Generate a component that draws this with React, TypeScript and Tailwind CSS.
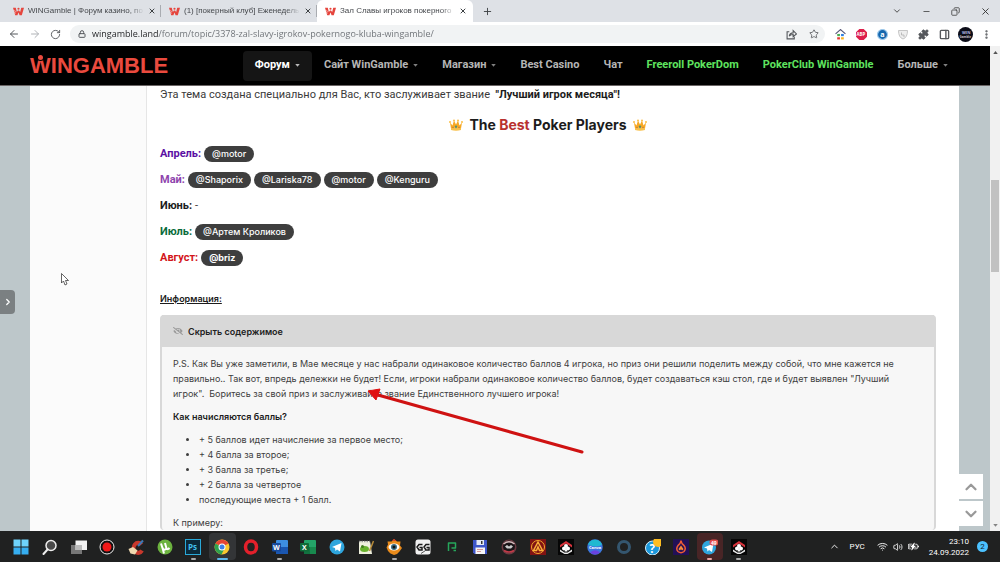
import type { ReactNode } from "react";
import {
  ArrowLeft, ArrowRight, ChevronDown, ChevronRight, ChevronUp, Copy, Lock, Minus, MoreVertical,
  PanelRight, Plus, Puzzle, RotateCw, Star, Volume2, Wifi, X,
} from "lucide-react";
import { BsBatteryCharging } from "react-icons/bs";
import { FaEyeSlash } from "react-icons/fa";

const tabs = [
  { title: "WINGamble | Форум казино, по", active: false },
  { title: "(1) [покерный клуб] Еженедель", active: false },
  { title: "Зал Славы игроков покерного", active: true },
];

const navItems = [
  { label: "Форум", caret: true, tone: "bg-[#151515] text-white" },
  { label: "Сайт WinGamble", caret: true, tone: "text-[#b5b5b5]" },
  { label: "Магазин", caret: true, tone: "text-[#b5b5b5]" },
  { label: "Best Casino", caret: false, tone: "text-[#b5b5b5]" },
  { label: "Чат", caret: false, tone: "text-[#b5b5b5]" },
  { label: "Freeroll PokerDom", caret: false, tone: "text-[#5fe35f]" },
  { label: "PokerClub WinGamble", caret: false, tone: "text-[#5fe35f]" },
  { label: "Больше", caret: true, tone: "text-[#b5b5b5]" },
];

const months = [
  { name: "Апрель:", color: "text-[#5b0fa3]", players: ["@motor"], bold: false },
  { name: "Май:", color: "text-[#8e44ad]", players: ["@Shaporix", "@Lariska78", "@motor", "@Kenguru"], bold: false },
  { name: "Июнь:", color: "text-[#1c1c1c]", players: [], bold: false },
  { name: "Июль:", color: "text-[#0a6b3b]", players: ["@Артем Кроликов"], bold: false },
  { name: "Август:", color: "text-[#d3161b]", players: ["@briz"], bold: true },
];

const points = [
  "+ 5 баллов идет начисление за первое место;",
  "+ 4 балла за второе;",
  "+ 3 балла за третье;",
  "+ 2 балла за четвертое",
  "последующие места + 1 балл.",
];

function Favicon() {
  return (
    <svg viewBox="0 0 20 16" className="w-[11px] h-[9px] shrink-0" aria-hidden="true">
      <path d="M0 1h5l2 8 2-3h2l2 3 2-8h5l-4 14h-4l-2-5-2 5H4z" fill="#e5453d" />
      <circle cx="10" cy="3" r="2" fill="#e5453d" />
      <path d="M1 6l4 2M2 10l3 1" stroke="#fff" strokeWidth="1" />
    </svg>
  );
}

function Crown() {
  return (
    <svg viewBox="0 0 28 24" className="w-[14px] h-3" aria-hidden="true">
      <path d="M2 7l5 6 3-10 4 8 4-8 3 10 5-6-2 12H4z" fill="#f7a823" />
      <path d="M4 18q10-3 20 0v4q-10 3-20 0z" fill="#f8c04a" />
      <circle cx="2" cy="6" r="2" fill="#fbbf45" />
      <circle cx="10" cy="3" r="2" fill="#fbbf45" />
      <circle cx="18" cy="3" r="2" fill="#fbbf45" />
      <circle cx="26" cy="6" r="2" fill="#fbbf45" />
      <path d="M14 12l2.500 3.500-2.500 3.500-2.500-3.500z" fill="#4b8f74" />
      <circle cx="8" cy="17" r="1.300" fill="#b96a3c" />
      <circle cx="20" cy="17" r="1.300" fill="#b96a3c" />
    </svg>
  );
}

function Caret() {
  return (
    <svg viewBox="0 0 6 4" className="w-[5px] h-[3px]" aria-hidden="true">
      <path d="M0 0h6L3 3.500z" fill="currentColor" opacity="0.7" />
    </svg>
  );
}

function ClubIcon() {
  return (
    <>
      <rect width="32" height="32" fill="#060606" />
      <path d="M4 12L16 4l12 8v5L16 9 4 17z" fill="#d8323b" />
      <path d="M4 21l9 6h6l9-6v4l-9 5h-6l-9-5z" fill="#e8e8e8" />
      <circle cx="16" cy="14" r="4" fill="#fff" />
      <circle cx="12" cy="19" r="4" fill="#fff" />
      <circle cx="20" cy="19" r="4" fill="#fff" />
      <path d="M16 16l3 9h-6z" fill="#fff" />
    </>
  );
}

interface TaskIcon {
  name: string;
  art: ReactNode;
  cell?: string;
  mark?: string;
}

const plane = <path d="M6 16l19-8-3 17-6-4-3 3-1-6z" fill="#fff" />;
const iconText = "font-['Open_Sans',sans-serif] font-bold";

// Every drawing shares a 32 x 32 view box
const taskIcons: TaskIcon[] = [
  { name: "Пуск", art: <><path d="M1 1h14v14H1zM17 1h14v14H17z" fill="#6fd3fb" /><path d="M1 17h14v14H1zM17 17h14v14H17z" fill="#36aef0" /></> },
  { name: "Поиск", art: <><circle cx="18" cy="13" r="10" fill="#4a4a4a" stroke="#eee" strokeWidth="3" /><path d="M11 21L3 30" stroke="#eee" strokeWidth="4" strokeLinecap="round" /></> },
  { name: "Представление задач", art: <><path d="M0 12h22v18H0z" fill="#777" /><path d="M9 3h23v19H9z" fill="#f2f2f2" /><path d="M9 12h13v10H9z" fill="#bbb" /></> },
  { name: "Запись", art: <><circle cx="16" cy="16" r="14" fill="#111" stroke="#eee" strokeWidth="2" /><circle cx="16" cy="16" r="9" fill="#f01818" /></> },
  { name: "CCleaner", art: <><path d="M27 11A9 10 0 1 0 28 23" fill="none" stroke="#c8382c" strokeWidth="8" /><path d="M30 3L20 14" stroke="#3d78b5" strokeWidth="4" /><path d="M1 20l9-4 9 7-5 8-9-2z" fill="#efd9b0" /></> },
  { name: "uTorrent", art: <><circle cx="16" cy="16" r="15" fill="#6cb33f" /><path d="M8 9l3 9q3 6 8 1l-3-11M19 19q2 3 6-1M11 18l3 11" fill="none" stroke="#fff" strokeWidth="4" /></> },
  { name: "Photoshop", mark: "w-[5px] bg-[#aaa]", art: <><rect x="1" y="1" width="30" height="30" fill="#0b2a3a" stroke="#2aa9d8" strokeWidth="2" /><text x="6" y="22" fontSize="16" fill="#41c0ee" className={iconText}>Ps</text></> },
  { name: "Chrome", cell: "bg-[#333537]", mark: "w-[11px] bg-[#5cb8ea]", art: <><circle cx="16" cy="16" r="15" fill="#f9c72f" /><path d="M16 16L3 9a15 15 0 0 1 26 0z" fill="#e64335" /><path d="M3 9a15 15 0 0 0 12 22l6-12z" fill="#2fa24f" /><circle cx="16" cy="16" r="7" fill="#fff" /><circle cx="16" cy="16" r="5" fill="#3f7fe8" /></> },
  { name: "Opera", art: <ellipse cx="16" cy="16" rx="11" ry="12" fill="none" stroke="#e3202b" strokeWidth="7" /> },
  { name: "Word", mark: "w-[5px] bg-[#aaa]", art: <><rect x="8" y="2" width="24" height="28" rx="2" fill="#3d8ee0" /><path d="M8 16h24v14H8z" fill="#1a56b0" /><rect y="8" width="18" height="17" rx="2" fill="#164a9c" /><text x="2" y="22" fontSize="14" fill="#fff" className={iconText}>W</text></> },
  { name: "Excel", art: <><rect x="8" y="2" width="24" height="28" rx="2" fill="#24a568" /><path d="M8 16h12v14H8z" fill="#127240" /><path d="M20 16h12v14H20z" fill="#188a4e" /><rect y="8" width="18" height="17" rx="2" fill="#0f6b38" /><text x="4" y="22" fontSize="14" fill="#fff" className={iconText}>X</text></> },
  { name: "Telegram", art: <><circle cx="16" cy="16" r="15" fill="#2ea5dd" />{plane}</> },
  { name: "Notepad++", art: <><path d="M2 4h22l4 26H2z" fill="#eef0dc" /><path d="M2 5h22" stroke="#999" strokeWidth="3" strokeDasharray="3 2" /><ellipse cx="13" cy="20" rx="9" ry="6" fill="#68b22d" /><circle cx="9" cy="15" r="3" fill="#417d1e" /><path d="M31 4l-8 20" stroke="#b98d3a" strokeWidth="3" /></> },
  { name: "Просмотр", mark: "w-[5px] bg-[#aaa]", art: <><path d="M16 0l6 5h7l-1 8 4 5-5 7-5 5-6 2-7-3-5-5-3-7 3-6-1-6 8 0z" fill="#e98b1b" /><path d="M12 3l4-3 5 4z" fill="#d3342e" /><ellipse cx="16" cy="16" rx="11" ry="7" fill="#fff" /><circle cx="16" cy="16" r="6" fill="#3a6d83" /><circle cx="16" cy="16" r="3" fill="#111" /></> },
  { name: "GG", art: <><rect x="1" y="1" width="30" height="30" rx="5" fill="#f1f1f1" /><path d="M15 11H8l-4 5 4 6h6v-5h-5M29 11h-7l-4 5 4 6h6v-5h-5" fill="none" stroke="#1b1b1b" strokeWidth="3" /><path d="M12 29l18-12" stroke="#555" strokeWidth="2" /></> },
  { name: "Poker", art: <path d="M9 24V8h14v10H15M19 23h5" fill="none" stroke="#26a65b" strokeWidth="3" strokeLinejoin="round" /> },
  { name: "Сохранение", art: <><path d="M2 2h28v28H5l-3-3z" fill="#3d55c9" /><path d="M9 2h15v10H9z" fill="#e4e9f5" /><path d="M18 4h3v6h-3z" fill="#333" /><path d="M7 17h19v13H7z" fill="#f6f6f6" /><path d="M10 21h12M10 25h8" stroke="#c77" strokeWidth="1.500" /></> },
  { name: "Покер", art: <><circle cx="16" cy="16" r="15" fill="#6d3b42" /><circle cx="16" cy="15" r="12" fill="#1b1518" /><path d="M5 10q11-9 22 0" fill="none" stroke="#d5b9bb" strokeWidth="3" /><path d="M8 15l4-3 4 3 4-3 4 3-4 4h-8z" fill="#ccc" /><path d="M6 23q10 6 20 0" fill="none" stroke="#c23b48" strokeWidth="3" /></> },
  { name: "Автоматы", art: <><rect width="32" height="32" fill="#801313" /><circle cx="16" cy="16" r="13" fill="none" stroke="#f6a92c" strokeWidth="2" /><path d="M16 6l9 17h-6l-3-7-3 7H7z" fill="none" stroke="#f9b03a" strokeWidth="3" /></> },
  { name: "Клуб", art: <ClubIcon /> },
  { name: "Canva", art: <><circle cx="16" cy="16" r="15.500" fill="#3c78e0" /><path d="M2 11A15 15 0 0 1 30 11Q20 19 2 11z" fill="#20b9d0" /><path d="M6 27a15 15 0 0 0 20 0q-9-9-20 0z" fill="#6a42de" /><text x="4" y="19" fontSize="8" fill="#fff" className={iconText}>Canva</text></> },
  { name: "Cortana", art: <circle cx="16" cy="16" r="11" fill="none" stroke="#34566f" strokeWidth="6" /> },
  { name: "Справка", art: <><circle cx="15" cy="18" r="14" fill="#1b98dc" stroke="#d9effa" strokeWidth="2" /><text x="9" y="27" fontSize="23" fill="#fff" className={iconText}>?</text><circle cx="26" cy="6" r="10" fill="#fdbd22" /></> },
  { name: "Огонь", art: <><rect width="32" height="32" fill="#221057" /><path d="M16 3q-1 7-6 10-5 7 0 12 6 5 12 0 5-6 0-12-5-3-6-10z" fill="none" stroke="#ef5c36" strokeWidth="3" /><path d="M16 13l5 7q-3 5-5 0-2 5-5 0z" fill="#f58b3a" /></> },
  { name: "Telegram 49", cell: "bg-[#482526]", mark: "w-[5px] bg-[#e9a5a5]", art: <><circle cx="14" cy="17" r="14" fill="#2ea5dd" /><g transform="translate(-2 1)">{plane}</g><rect x="15" y="1" width="18" height="12" rx="6" fill="#e14c4c" /><text x="18" y="11" fontSize="10" fill="#fff" className={iconText}>49</text></> },
  { name: "Клуб WinGamble", mark: "w-[5px] bg-[#aaa]", art: <ClubIcon /> },
];

function TabStrip() {
  return (
    <div className="h-[22px] shrink-0 flex items-stretch bg-[#dee1e6] pl-[5px]">
      {tabs.map(tab => (
        <div key={tab.title}
          className={`w-[156px] flex items-center pl-2 pr-[6px] gap-1 ${tab.active ? "bg-white rounded-t-md" : ""}`}>
          <Favicon />
          <a href="#" className="flex-1 overflow-hidden whitespace-nowrap font-['Liberation_Sans',sans-serif] text-[8px] leading-4 text-[#45484c] [mask-image:linear-gradient(to_right,#000_88%,transparent)]">
            {tab.title}
          </a>
          <button aria-label="Закрыть вкладку"><X size={8} strokeWidth={3} className="text-[#3c4043]" /></button>
          {!tab.active && <span className="w-px h-3 -mr-[6px] bg-[#a9acb1]" />}
        </div>
      ))}
      <button aria-label="Новая вкладка" className="ml-[9px]"><Plus size={11} strokeWidth={2} className="text-[#3c4043]" /></button>
      <div className="ml-auto flex items-center gap-5 pr-[9px] text-[#333]">
        <button aria-label="Поиск вкладок"><ChevronDown size={10} /></button>
        <button aria-label="Свернуть"><Minus size={9} /></button>
        <button aria-label="Восстановить"><Copy size={9} className="-scale-x-100" /></button>
        <button aria-label="Закрыть"><X size={11} strokeWidth={2} /></button>
      </div>
    </div>
  );
}

function Toolbar() {
  return (
    <div className="h-6 shrink-0 flex items-center bg-white pl-2 pr-2 text-[#55585c]">
      <div className="flex gap-[9px] mr-[9px]">
        <button aria-label="Назад"><ArrowLeft size={12} /></button>
        <button aria-label="Вперёд" className="text-[#b0b3b7]"><ArrowRight size={12} /></button>
        <button aria-label="Обновить"><RotateCw size={11} strokeWidth={2} /></button>
      </div>
      <div className="flex-1 h-[18px] flex items-center gap-[6px] rounded-full bg-[#f1f3f4] pl-2 pr-[6px]">
        <Lock size={8} strokeWidth={3} />
        <input aria-label="Адрес" readOnly
          value="wingamble.land/forum/topic/3378-zal-slavy-igrokov-pokernogo-kluba-wingamble/"
          className="flex-1 outline-none font-['Open_Sans',sans-serif] text-[9px] leading-4 text-transparent bg-clip-text bg-[linear-gradient(to_right,#202124_67px,#6b6f74_67px)]" />
        <button aria-label="Поделиться" className="mr-[6px]">
          <svg viewBox="0 0 20 20" className="size-[11px]" fill="none" stroke="currentColor" strokeWidth="2" aria-hidden="true">
            <path d="M6 5H2v13h13v-4M6 13q1-6 7-6V3l6 6-6 5v-4q-5 0-7 3z" />
          </svg>
        </button>
        <button aria-label="В закладки"><Star size={10} /></button>
      </div>
      <div className="flex items-center gap-[10px] ml-[10px]">
        <svg viewBox="0 0 20 20" className="w-[11px] h-[11px]" aria-hidden="true">
          <path d="M1 9l9-8 9 8" fill="none" stroke="#557" strokeWidth="2" />
          <path d="M4 9h5v4H4z" fill="#4caf50" /><path d="M11 9h5v4h-5z" fill="#2f7fe0" />
          <path d="M4 15h5v4H4z" fill="#e53935" /><path d="M11 15h5v4h-5z" fill="#fbb321" />
        </svg>
        <svg viewBox="0 0 20 20" className="w-[11px] h-[11px]" aria-hidden="true">
          <path d="M6 0h8l6 6v8l-6 6H6l-6-6V6z" fill="#dd1f4b" />
          <text x="1" y="13" fontSize="8" fill="#fff" className={iconText}>ABP</text>
        </svg>
        <svg viewBox="0 0 20 20" className="w-[11px] h-[11px]" aria-hidden="true">
          <circle cx="10" cy="10" r="9" fill="#1466ad" stroke="#9dc9ec" strokeWidth="2" />
          <text x="6" y="15" fontSize="13" fill="#fff" className={iconText}>a</text>
        </svg>
        <svg viewBox="0 0 20 20" className="w-[10px] h-[11px]" aria-hidden="true">
          <path d="M1 2h18q0 14-9 17Q1 16 1 2z" fill="#eee" stroke="#c5c5c5" strokeWidth="2" />
          <path d="M7 6v5h5v4" fill="none" stroke="#bbb" strokeWidth="2" />
        </svg>
        <button aria-label="Расширения"><Puzzle size={11} fill="currentColor" /></button>
        <button aria-label="Боковая панель"><PanelRight size={11} strokeWidth={3} /></button>
      </div>
      <button aria-label="Профиль" className="ml-2 size-[15px] rounded-full bg-[#0c0d18] text-white">
        <svg viewBox="0 0 30 30" aria-hidden="true">
          <text x="8" y="14" fontSize="8" fill="#b7bbea" className={iconText}>WIN</text>
          <text x="3" y="21" fontSize="6" fill="#ccc" className={iconText}>Gamble</text>
        </svg>
      </button>
      <button aria-label="Меню" className="ml-2"><MoreVertical size={11} strokeWidth={3} /></button>
    </div>
  );
}

function SiteHeader() {
  return (
    <header className="h-10 shrink-0 flex items-center justify-between bg-black border-b border-[#6a6565] px-[30px]">
      <a href="#" className="relative font-['Liberation_Sans',sans-serif] font-bold text-[22px] leading-none text-[#ea4a3e]">
        WINGAMBLE
        <span className="absolute left-2 top-0 size-[5px] rounded-full bg-[#ea4a3e] ring-1 ring-black" />
      </a>
      <nav className="flex">
        {navItems.map(item => (
          <a key={item.label} href="#"
            className={`h-[30px] flex items-center gap-[5px] px-3 rounded-sm whitespace-nowrap font-bold text-[11px] ${item.tone}`}>
            {item.label}
            {item.caret && <Caret />}
          </a>
        ))}
      </nav>
    </header>
  );
}

function Spoiler() {
  return (
    <section className="relative mt-2 rounded-sm border-x-2 border-[#d8d8d8] bg-[#f7f7f7] font-['Inter',sans-serif] text-[9px] leading-[15px]">
      <button className="w-full h-8 flex items-center gap-[5px] px-[11px] bg-[#d8d8d8] font-semibold text-[#222]">
        <FaEyeSlash size={10} className="text-[#999]" />
        Скрыть содержимое
      </button>
      <div className="px-[11px] pt-[9px] text-[#3d3d3d]">
        <p className="pr-4">
          P.S. Как Вы уже заметили, в Мае месяце у нас набрали одинаковое количество баллов 4 игрока, но приз они решили поделить между собой, что мне кажется не правильно.. Так вот, впредь дележки не будет! Если, игроки набрали одинаковое количество баллов, будет создаваться кэш стол, где и будет выявлен "Лучший игрок".&nbsp; Боритесь за свой приз и заслуживайте звание Единственного лучшего игрока!
        </p>
        <p className="mt-2 font-semibold text-[#1c1c1c]">Как начисляются баллы?</p>
        <ul className="mt-2 pl-[26px] list-disc">
          {points.map(point => <li key={point}>{point}</li>)}
        </ul>
        <p className="mt-2">К примеру:</p>
      </div>
      {/* Hand-drawn pointer over the text */}
      <svg viewBox="0 0 220 70" className="absolute left-[204px] top-[72px] w-[220px] h-[70px]" aria-hidden="true">
        <path d="M12 8L216 65" stroke="#cf1212" strokeWidth="3" strokeLinecap="round" />
        <path d="M2 4l12-2-4 11z" fill="#e01010" stroke="#e01010" strokeWidth="1" />
      </svg>
    </section>
  );
}

function Topic() {
  return (
    <article className="flex-1 min-w-0 border-l border-[#e6e6e6] bg-white pl-[13px] pr-[23px] pt-px text-[11px] leading-4 text-[#3a3a3a]">
      <p>
        Эта тема создана специально для Вас, кто заслуживает звание&nbsp; <b className="font-bold text-[#1c1c1c]">"Лучший игрок месяца"!</b>
      </p>
      <h2 className="mt-3 flex items-center justify-center gap-[6px] font-['Inter',sans-serif] font-bold text-[14px] leading-5 text-[#1c1c1c]">
        <Crown />
        <span>The <span className="text-[#b8312f]">Best</span> Poker Players</span>
        <Crown />
      </h2>
      <div className="mt-[6px]">
        {months.map(month => (
          <p key={month.name} className="h-[26px] flex items-center gap-[3px]">
            <b className={`font-bold ${month.color}`}>{month.name}</b>
            {month.players.length === 0 && <span>-</span>}
            {month.players.map(player => (
              <a key={player} href="#"
                className={`h-4 px-2 rounded-full bg-[#3e3e3e] font-['Inter',sans-serif] text-[9px] text-white ${month.bold ? "font-bold" : "font-medium"}`}>
                {player}
              </a>
            ))}
          </p>
        ))}
      </div>
      <p className="mt-5 font-['Inter',sans-serif] font-semibold text-[9px] text-[#1c1c1c] underline">Информация:</p>
      <Spoiler />
    </article>
  );
}

function ScrollBar() {
  return (
    <div className="w-[10px] shrink-0 flex flex-col items-center bg-[#f1f1f1] pt-[5px] pb-1 text-[#555]">
      <svg viewBox="0 0 6 4" className="w-[5px] h-[3px] rotate-180" aria-hidden="true"><path d="M0 0h6L3 4z" fill="currentColor" /></svg>
      <div className="mt-[126px] w-2 h-[92px] bg-[#c1c1c1]" />
      <div className="mt-auto"><Caret /></div>
    </div>
  );
}

function Taskbar() {
  return (
    <footer className="h-[31px] shrink-0 flex items-center bg-[#202121] pl-[7px] pr-3 text-white">
      <div className="w-[746px] shrink-0 grid grid-cols-[repeat(26,minmax(0,1fr))]">
        {taskIcons.map(icon => (
          <button key={icon.name} aria-label={icon.name}
            className={`relative h-[27px] mx-px flex items-center justify-center rounded-sm ${icon.cell ?? ""}`}>
            <svg viewBox="0 0 32 32" className="size-4" aria-hidden="true">{icon.art}</svg>
            {icon.mark && <span className={`absolute bottom-0 h-[2px] rounded-full ${icon.mark}`} />}
          </button>
        ))}
      </div>
      <div className="ml-auto flex items-center">
        <button aria-label="Скрытые значки"><ChevronUp size={11} strokeWidth={2} /></button>
        <span className="ml-[10px] text-[8px]">РУС</span>
        <div className="ml-3 flex items-center gap-[5px]">
          <Wifi size={11} strokeWidth={2} />
          <Volume2 size={10} strokeWidth={2} />
          <BsBatteryCharging size={11} />
        </div>
        <div className="ml-[10px] text-right text-[8px] leading-[11px]">
          <div>23:10</div>
          <div>24.09.2022</div>
        </div>
        <span className="ml-2 size-[11px] rounded-full bg-[#4cc2ff] text-center text-[8px] leading-[11px] text-[#12222c]">2</span>
      </div>
    </footer>
  );
}

export default function App() {
  return (
    <div className="h-screen flex flex-col overflow-hidden font-['Roboto','Noto_Sans',sans-serif]">
      <TabStrip />
      <Toolbar />
      <div className="flex-1 min-h-0 flex">
        <div className="relative flex-1 min-w-0 flex flex-col bg-[#bdc7ca]">
          <SiteHeader />
          <main className="flex-1 min-h-0 flex overflow-hidden ml-[30px] mr-[31px]">
            <aside className="w-[116px] shrink-0 bg-[#fbfbfb]" />
            <Topic />
          </main>
          <button aria-label="Открыть панель" className="absolute left-0 top-[244px] w-[15px] h-6 flex items-center justify-center rounded-r-sm bg-[#7b8082] text-white">
            <ChevronRight size={10} strokeWidth={3} />
          </button>
          <div className="absolute right-[7px] bottom-[5px] flex flex-col gap-[2px] text-[#999]">
            <button aria-label="Наверх" className="size-[25px] flex items-center justify-center bg-white"><ChevronUp size={18} strokeWidth={3} /></button>
            <button aria-label="Вниз" className="size-[25px] flex items-center justify-center bg-white"><ChevronDown size={18} strokeWidth={3} /></button>
          </div>
          {/* Mouse pointer */}
          <svg viewBox="0 0 16 26" className="absolute left-[61px] top-[227px] w-2 h-[13px]" aria-hidden="true">
            <path d="M1 1v19l4-4 3 8 4-2-3-7h6z" fill="#fff" stroke="#333" strokeWidth="1.500" />
          </svg>
        </div>
        <ScrollBar />
      </div>
      <Taskbar />
    </div>
  );
}
